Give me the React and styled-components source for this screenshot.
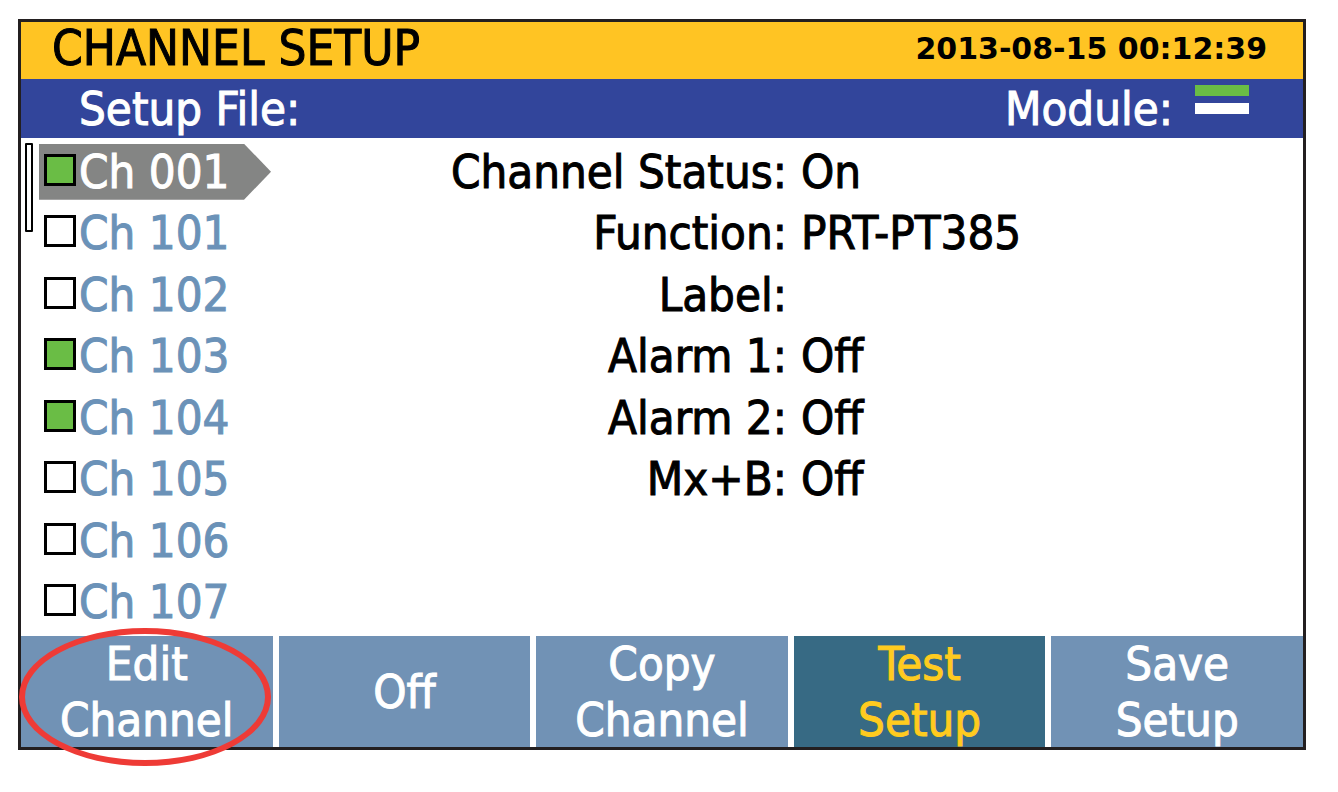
import { useState } from "react"
import styled, { createGlobalStyle } from "styled-components"

const GlobalStyle = createGlobalStyle`
  * {
    box-sizing: border-box;
  }
  body {
    margin: 0;
    background-color: #fff;
  }
`
const Screen = styled.main`
  margin: 19px 32px 42px 18px;
  border: 3px solid #231f20;
  background-color: #fff;
  color: #000;
  font-family: "DejaVu Sans Condensed", "DejaVu Sans", sans-serif;
  font-size: 47px;
  line-height: 56px;
  -webkit-text-stroke: 1px currentColor;
`
const TitleBar = styled.header`
  display: flex;
  align-items: center;
  justify-content: space-between;
  height: 57px;
  padding: 0 36px 4px 31px;
  background-color: #ffc423;
`
const Title = styled.h1`
  margin: 0;
  font-size: 49px;
  font-weight: 400;
`
const Clock = styled.time`
  font-family: "DejaVu Sans", sans-serif;
  font-size: 30px;
  font-weight: 700;
  -webkit-text-stroke: 0;
`
const FileBar = styled.div`
  display: flex;
  align-items: center;
  justify-content: space-between;
  height: 59px;
  padding: 0 54px 0 58px;
  background-color: #32459b;
  color: #fff;
`
const Module = styled.div`
  display: flex;
  align-items: center;
  gap: 22px;
`
const ModuleSlots = styled.div`
  display: flex;
  flex-direction: column;
  gap: 7px;
  padding-bottom: 18px;
`
const Slot = styled.div`
  width: 54px;
  height: 11px;
  background-color: ${({ $active }) => ($active ? "#6abd45" : "#fff")};
`
const Content = styled.div`
  display: flex;
  padding: 3px 0 3px 4px;
`
const ScrollThumb = styled.div`
  flex-shrink: 0;
  width: 8px;
  height: 89px;
  margin: 2px 6px 0 0;
  border: 2px solid #000;
  border-radius: 1px;
`
const ChannelList = styled.ul`
  display: grid;
  grid-template-rows: repeat(8, 1fr);
  align-items: center;
  flex-shrink: 0;
  width: 232px;
  height: 492px;
  margin: 0;
  padding: 0;
  list-style: none;
`
const Channel = styled.label`
  display: flex;
  align-items: center;
  gap: 3px;
  padding-left: 5px;
  white-space: nowrap;
  color: ${({ $selected }) => ($selected ? "#fff" : "#6b92b8")};
  background-color: ${({ $selected }) => ($selected ? "#848584" : "transparent")};
  clip-path: polygon(0 0, calc(100% - 27px) 0, 100% 50%, calc(100% - 27px) 100%, 0 100%);
`
const Checkbox = styled.input`
  appearance: none;
  flex-shrink: 0;
  width: 32px;
  height: 32px;
  margin: 0 0 4px;
  border: 3px solid #000;
  background-color: #fff;
  &:checked {
    background-color: #6abd45;
  }
`
const Details = styled.dl`
  flex: 1;
  margin: 0;
  padding-left: 14px;
  height: 492px;
  display: grid;
  grid-template-rows: repeat(8, 1fr);
`
const Detail = styled.div`
  display: grid;
  grid-template-columns: 1fr 1fr;
  gap: 14px;
  align-items: center;
`
const Name = styled.dt`
  text-align: right;
  white-space: nowrap;
`
const Value = styled.dd`
  margin: 0;
`
const SoftKeys = styled.nav`
  display: grid;
  grid-template-columns: repeat(5, 1fr);
  gap: 6px;
`
const KeyCell = styled.div`
  position: relative;
`
const SoftKey = styled.button`
  display: flex;
  align-items: center;
  justify-content: center;
  width: 100%;
  height: 111px;
  padding: 0 32px;
  border: none;
  background-color: ${({ $active }) => ($active ? "#376a84" : "#7192b5")};
  color: ${({ $active }) => ($active ? "#ffcb1f" : "#fff")};
  font: inherit;
  text-align: center;
  cursor: pointer;
`
const Highlight = styled.div`
  position: absolute;
  top: -8px;
  left: -2px;
  width: 252px;
  height: 138px;
  border: 6px solid #ee3b36;
  border-radius: 50%;
  pointer-events: none;
`

const channels = ["001", "101", "102", "103", "104", "105", "106", "107"]

const details = [
  ["Channel Status", "On"],
  ["Function", "PRT-PT385"],
  ["Label", ""],
  ["Alarm 1", "Off"],
  ["Alarm 2", "Off"],
  ["Mx+B", "Off"],
]

const softKeys = [
  { label: "Edit Channel", highlighted: true },
  { label: "Off" },
  { label: "Copy Channel" },
  { label: "Test Setup", active: true },
  { label: "Save Setup" },
]

export default function App() {
  const [enabled, setEnabled] = useState(["001", "103", "104"])

  const toggle = (id) =>
    setEnabled(enabled.includes(id) ? enabled.filter((c) => c !== id) : [...enabled, id])

  return (
    <>
      <GlobalStyle />
      <Screen>
        <TitleBar>
          <Title>CHANNEL SETUP</Title>
          <Clock dateTime="2013-08-15T00:12:39">2013-08-15 00:12:39</Clock>
        </TitleBar>
        <FileBar>
          <span>Setup File:</span>
          <Module>
            <span>Module:</span>
            <ModuleSlots>
              <Slot $active />
              <Slot />
            </ModuleSlots>
          </Module>
        </FileBar>
        <Content>
          <ScrollThumb />
          <ChannelList>
            {channels.map((id) => (
              <li key={id}>
                <Channel $selected={id === "001"}>
                  <Checkbox type="checkbox" checked={enabled.includes(id)} onChange={() => toggle(id)} />
                  Ch {id}
                </Channel>
              </li>
            ))}
          </ChannelList>
          <Details>
            {details.map(([name, value]) => (
              <Detail key={name}>
                <Name>{name}:</Name>
                <Value>{value}</Value>
              </Detail>
            ))}
          </Details>
        </Content>
        <SoftKeys>
          {softKeys.map(({ label, active, highlighted }) => (
            <KeyCell key={label}>
              <SoftKey type="button" $active={active}>{label}</SoftKey>
              {highlighted && <Highlight />}
            </KeyCell>
          ))}
        </SoftKeys>
      </Screen>
    </>
  )
}
